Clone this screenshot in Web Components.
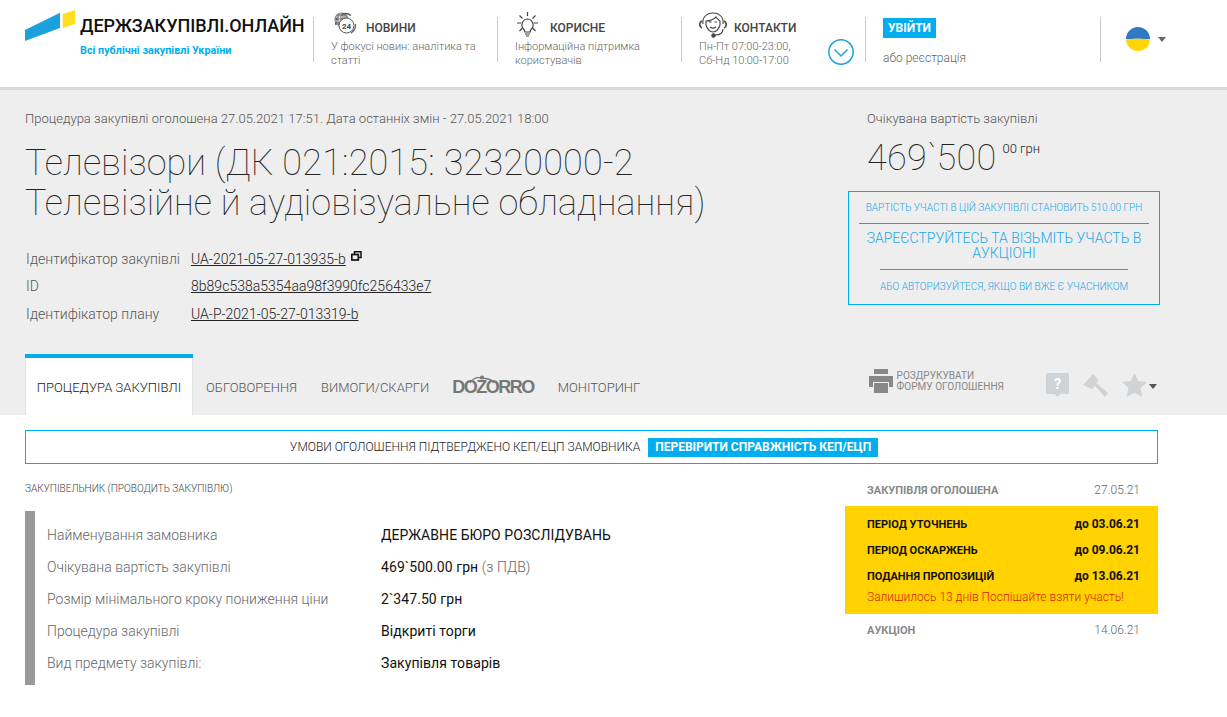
<!DOCTYPE html>
<html lang="uk"><head><meta charset="utf-8"><title>Держзакупівлі</title>
<style>
html,body{margin:0;padding:0;background:#fff;font-family:Roboto,"Liberation Sans",sans-serif;overflow:hidden}
body{width:1227px;height:717px}
</style></head><body>
<site-header></site-header>
<tender-hero></tender-hero>
<tender-tabs></tender-tabs>
<tender-body></tender-body>
<script>
function def(name,html){customElements.define(name,class extends HTMLElement{constructor(){super();this.attachShadow({mode:'open'}).innerHTML=html}})}
def('nav-col',`<style>
:host{display:block;width:184px;height:45px;box-sizing:border-box;border-left:1px solid #c9c9c9;padding-left:17px;position:relative}
.t{display:flex;align-items:center;height:24px;margin-top:-1px;gap:9px;font-size:12px;font-weight:500;color:#444}
::slotted(svg){flex:none}
.d{font-size:11px;line-height:14px;font-weight:300;color:#666;width:155px}
</style><div class="t"><slot name="icon"></slot><slot name="title"></slot></div><div class="d"><slot></slot></div>`);
def('site-header',`<style>
:host{display:flex;height:87px;box-sizing:border-box;padding:17px 0 0 25px;background:#fff;position:relative}
.logo{width:288px;flex:none;position:relative;height:45px}
.logo svg{position:absolute;left:0;top:-7px}
.name{position:absolute;left:55px;top:-2px;font-size:18px;line-height:22px;font-weight:500;color:#111;white-space:nowrap;letter-spacing:-.05px}
.sub{position:absolute;left:55px;top:27px;font-size:10.8px;line-height:14px;font-weight:700;color:#00aeef;white-space:nowrap}
.chev{position:absolute;left:827px;top:39px}
.login{width:235px;height:45px;box-sizing:border-box;border-left:1px solid #c9c9c9;padding-left:17px;flex:none}
.btn{display:inline-block;background:#00aeef;color:#fff;font-size:12px;line-height:20px;font-weight:700;padding:0 5px;height:20px}
.reg{font-size:12px;font-weight:300;color:#666;margin-top:12px;line-height:16px}
.lang{border-left:1px solid #c9c9c9;height:45px;flex:none;width:80px;position:relative}
.lang svg{position:absolute}
</style>
<div class="logo">
<svg width="52" height="32" viewBox="0 0 52 32"><polygon points="0,20 35,2.7 35,18 0,31" fill="#1ba1dc"/><polygon points="37.7,4 50,0 50,14 37.7,18" fill="#ffdd1f"/></svg>
<div class="name">ДЕРЖЗАКУПІВЛІ.ОНЛАЙН</div><div class="sub">Всі публічні закупівлі України</div></div>
<nav-col><svg slot="icon" style="margin:0 0 8px 2px" width="24" height="24" viewBox="0 0 24 24" fill="none" stroke="#555"><path d="M3 13A9.5 9.5 0 0 1 18 3.5" stroke-width="1.5"/><circle cx="8.5" cy="7.5" r="7" fill="#666" stroke="none" opacity=".8"/><path d="M3 5h10M2 9h8M8 1c-2 3-2 7 0 12" stroke="#eee" stroke-width=".8"/><circle cx="13.5" cy="13.5" r="7.5" fill="#fff" stroke="#555" stroke-width="1"/><text x="13.5" y="16.5" font-size="8" font-weight="700" text-anchor="middle" fill="#444" stroke="none" font-family="Roboto">24</text><path d="M22.5 12a9.5 9.5 0 0 1-4.5 9" stroke-width="1.1"/></svg><span slot="title">НОВИНИ</span>У фокусі новин: аналітика та статті</nav-col>
<nav-col><svg slot="icon" style="margin:0 1px 8px 0" width="25" height="25" viewBox="0 0 25 25" fill="none" stroke="#444" stroke-width="1.2"><path d="M12.5 7a6 6 0 0 0-3.5 10.5c.6.6.8 1.2.8 2.5h5.4c0-1.3.2-1.9.8-2.5A6 6 0 0 0 12.5 7z"/><path d="M10 22h5M11 24h3M12.5 0v4M2 11H6.5M18.5 11H23M4.5 3.5l3 3M20.5 3.5l-3 3M4.5 19l3-3M20.5 19l-3-3"/></svg><span slot="title">КОРИСНЕ</span>Інформаційна підтримка користувачів</nav-col>
<nav-col><svg slot="icon" style="margin:0 -2px 6px 0" width="28" height="26" viewBox="0 0 28 26" fill="none" stroke="#444" stroke-width="1.1"><path d="M4 12C3 6 7 1 14 1s11 5 10 11"/><path d="M7 9c4 0 7-1 10-4 1 2 3 3 4 4v4c-1 4-4 7-7 7s-6-3-7-7z"/><path d="M3 9c-3 1-3 6 0 7M25 9c3 1 3 6 0 7" stroke-width="1.6"/><path d="M10 10h2.5M15.5 10h2.5M11 15c2 1.5 4 1.5 6 0"/><path d="M24 17c0 4-3 6-8 6"/><circle cx="14.5" cy="23.5" r="1.7" fill="#444"/></svg><span slot="title">КОНТАКТИ</span>Пн-Пт 07:00-23:00,<br>Сб-Нд 10:00-17:00</nav-col>
<div class="login"><span class="btn">УВІЙТИ</span><div class="reg">або реєстрація</div></div>
<div class="lang"><svg style="left:25px;top:10px" width="24" height="24" viewBox="0 0 24 24"><path d="M0 12a12 12 0 0 1 24 0z" fill="#3079c5"/><path d="M0 12a12 12 0 0 0 24 0z" fill="#ffd503"/><path d="M.2 13.5a12 2.5 0 0 1 23.6 0 12 12 0 0 0 .2-1.5H0z" fill="#ffe35a"/></svg><svg style="left:57px;top:20px" width="8" height="5" viewBox="0 0 8 5"><path d="M0 0h8L4 5z" fill="#666"/></svg></div>
<svg class="chev" width="28" height="28" viewBox="0 0 28 28" fill="none" stroke="#1ba1dc" stroke-width="1.5"><circle cx="14" cy="13" r="12.2"/><path d="M7.5 10.5l6.5 6.5 6.5-6.5"/></svg>`);
def('id-row',`<style>:host{display:flex;height:27.5px;align-items:center;font-size:14px;font-weight:300;color:#555}
.l{width:166px;flex:none;box-sizing:border-box;padding-left:1px;letter-spacing:.03px}.v{color:#222;text-decoration:underline;font-weight:300;display:flex;letter-spacing:.02px}
</style><div class="l"><slot name="label"></slot></div><div class="v"><slot></slot></div>`);
def('tender-hero',`<style>
:host{display:flex;height:267px;box-sizing:border-box;background:#eee;border-top:3px solid #d8d8d8;padding:0 67px 0 25px}
.left{width:823px;flex:none}
.meta{font-size:13px;font-weight:300;color:#555;line-height:16px;margin-top:21px;letter-spacing:.024px}
h1{margin:16px 0 0;font-size:36px;line-height:40px;font-weight:100;color:#222;width:760px;letter-spacing:.08px}
h1 span{letter-spacing:.2px}
.ids{margin-top:22px}
.copy{margin:0 0 0 5px}
.right{width:312px;flex:none}
.cap{font-size:13px;font-weight:300;color:#555;line-height:16px;margin:21px 0 0 19px}
.price{font-size:36px;font-weight:100;color:#222;margin:9px 0 0 19px;line-height:44px;white-space:nowrap;letter-spacing:.25px}
.price sup{font-size:13px;font-weight:300;vertical-align:baseline;position:relative;top:-17px;margin-left:6px;letter-spacing:0}
.box{margin-top:3px;height:114px;box-sizing:border-box;border:1px solid #00aeef;color:#1ba8ea;text-align:center;padding-top:7px}
.a{font-size:10px;font-weight:300;line-height:18px;white-space:nowrap;height:24px;border-bottom:1px solid #00aeef;margin:0 10px}
.b{font-size:14px;font-weight:300;line-height:14.5px;padding:7px 0 9px;margin:0 10px}
.c{font-size:10px;font-weight:300;line-height:18px;border-top:1px solid #00aeef;margin:0 31px;padding-top:8px;white-space:nowrap}
</style>
<div class="left"><div class="meta">Процедура закупівлі оголошена 27.05.2021 17:51. Дата останніх змін - 27.05.2021 18:00</div>
<h1>Телевізори (ДК <span>021:2015: 32320000-2</span> Телевізійне й аудіовізуальне обладнання)</h1>
<div class="ids">
<id-row><span slot="label">Ідентифікатор закупівлі</span>UA-2021-05-27-013935-b<svg class="copy" width="11" height="11" viewBox="0 0 11 11" fill="none" stroke="#111" stroke-width="1.5"><path d="M3.5 3V.8H10V6.5H8"/><rect x=".8" y="3.5" width="6.5" height="5.5" stroke-width="1.7"/></svg></id-row>
<id-row><span slot="label">ID</span>8b89c538a5354aa98f3990fc256433e7</id-row>
<id-row><span slot="label">Ідентифікатор плану</span>UA-P-2021-05-27-013319-b</id-row>
</div></div>
<div class="right"><div class="cap">Очікувана вартість закупівлі</div>
<div class="price">469\`500<sup>00 грн</sup></div>
<div class="box"><div class="a">ВАРТІСТЬ УЧАСТІ В ЦІЙ ЗАКУПІВЛІ СТАНОВИТЬ 510.00 ГРН</div><div class="b">ЗАРЕЄСТРУЙТЕСЬ ТА ВІЗЬМІТЬ УЧАСТЬ В АУКЦІОНІ</div><div class="c">АБО АВТОРИЗУЙТЕСЯ, ЯКЩО ВИ ВЖЕ Є УЧАСНИКОМ</div></div></div>`);
def('tender-tabs',`<style>
:host{display:flex;height:61px;background:#eee;padding-left:25px;padding-right:70px;align-items:stretch;font-size:13px;font-weight:300;color:#555;position:relative}
.tab{display:flex;align-items:center;padding:5px 12px 0;white-space:nowrap}
.on{background:#fff;border-top:4px solid #00aeef;color:#222;width:168px;box-sizing:border-box;justify-content:center;padding:1px 0 0;box-shadow:inset 1px 0 #e4e4e4,inset -1px 0 #e4e4e4;margin-right:1px}
.doz{font:700 18px "Liberation Sans",sans-serif;letter-spacing:-1.5px;color:#777;padding:5px 0 0;margin:0 12px 0 11px;position:relative}
.doz svg{position:absolute;left:16px;top:21px}
.spacer{flex:1}
.print{display:flex;align-items:center;gap:4px;font-size:10.05px;font-weight:400;color:#888;line-height:11.5px;margin-right:42px;padding-bottom:7px}
.icons{display:flex;align-items:center;gap:14px}
.icons svg{display:block}
</style>
<div class="tab on">ПРОЦЕДУРА ЗАКУПІВЛІ</div><div class="tab">ОБГОВОРЕННЯ</div><div class="tab">ВИМОГИ/СКАРГИ</div><div class="tab doz">DOZORRO<svg width="28" height="9" viewBox="0 0 28 9" fill="none" stroke="#777" stroke-width="1.3"><path d="M2 8C5 3 10 2 14 3s9 0 12 5"/><circle cx="14" cy="2.5" r="2" fill="#777" stroke="none"/></svg></div><div class="tab">МОНІТОРИНГ</div>
<div class="spacer"></div>
<div class="print"><svg width="24" height="24" viewBox="0 0 24 24" fill="#888"><rect x="5" y="0" width="14" height="5"/><path d="M0 7h24v11h-4v-5H4v5H0z"/><rect x="5" y="14" width="14" height="10"/></svg><div>РОЗДРУКУВАТИ<br>ФОРМУ ОГОЛОШЕННЯ</div></div>
<div class="icons">
<svg width="23" height="24" viewBox="0 0 24 24" preserveAspectRatio="none"><path d="M2 0h20a2 2 0 0 1 2 2v17a2 2 0 0 1-2 2h-7l-3 3-3-3H2a2 2 0 0 1-2-2V2a2 2 0 0 1 2-2z" fill="#d0d3d6"/><text x="12" y="16" font-size="15" font-weight="700" fill="#fff" text-anchor="middle" font-family="Roboto">?</text></svg>
<svg width="25" height="24" viewBox="0 0 25 24" fill="#d0d3d6"><path d="M0 12 10 1l6 6-3 3 12 10-3 4-10-11-3 3z"/></svg>
<div style="display:flex;align-items:center;gap:2px"><svg width="25" height="24" viewBox="0 0 25 24" fill="#d0d3d6"><path d="M12.5 0l3.7 8 8.8 1-6.5 6 1.8 9-7.8-4.5L4.7 24l1.8-9L0 9l8.8-1z"/></svg><svg width="8" height="5" viewBox="0 0 8 5" style="margin-top:4px"><path d="M0 0h8L4 5z" fill="#555"/></svg></div>
</div>`);
def('info-row',`<style>:host{display:flex;height:32px;align-items:center;font-size:14px;color:#111;letter-spacing:.07px}
.l{width:334px;flex:none;font-weight:300;color:#666;letter-spacing:0}
</style><div class="l"><slot name="label"></slot></div><div><slot></slot></div>`);
def('stage-row',`<style>:host{display:flex;justify-content:space-between;align-items:center;font-size:11px;height:26px;font-weight:700;color:#111;white-space:nowrap}
.d{font-size:12px}
</style><span><slot></slot></span><span class="d"><slot name="date"></slot></span>`);
def('tender-body',`<style>
:host{display:block;padding:15px 0 0 25px;background:#fff;height:302px;box-sizing:border-box}
.kep{width:1133px;height:34px;box-sizing:border-box;border:1px solid #00aeef;padding-right:15px;display:flex;justify-content:center;align-items:center;gap:8px;font-size:12px;font-weight:300;color:#222}
.kep b{background:#00aeef;color:#fff;font-weight:700;padding:0 7px;line-height:19px;height:19px}
.cols{display:flex}
.main{width:820px;flex:none}
.lbl{font-size:10px;font-weight:300;color:#444;margin-top:19px;line-height:12px}
.card{margin-top:16px;height:174px;box-sizing:border-box;border-left:10px solid #999;padding:8px 0 0 12px}
.side{width:313px;flex:none;margin-top:10px}
.top{display:flex;justify-content:space-between;height:32px;align-items:center;padding:0 18px 0 22px;font-size:11px;font-weight:700;color:#888}
.top span:last-child{font-size:12px;font-weight:300;color:#666}
.y{background:#ffd200;height:108px;box-sizing:border-box;padding:5px 18px 0 22px}
.w{font-size:12px;font-weight:300;color:#d9211c;line-height:14px;margin-top:1px;white-space:nowrap}
</style>
<div class="kep"><span>УМОВИ ОГОЛОШЕННЯ ПІДТВЕРДЖЕНО КЕП/ЕЦП ЗАМОВНИКА</span><b>ПЕРЕВІРИТИ СПРАВЖНІСТЬ КЕП/ЕЦП</b></div>
<div class="cols"><div class="main"><div class="lbl">ЗАКУПІВЕЛЬНИК (ПРОВОДИТЬ ЗАКУПІВЛЮ)</div>
<div class="card">
<info-row><span slot="label">Найменування замовника</span>ДЕРЖАВНЕ БЮРО РОЗСЛІДУВАНЬ</info-row>
<info-row><span slot="label">Очікувана вартість закупівлі</span><span>469\`500.00 грн <span style="color:#666;font-weight:300">(з ПДВ)</span></span></info-row>
<info-row><span slot="label">Розмір мінімального кроку пониження ціни</span>2\`347.50 грн</info-row>
<info-row><span slot="label">Процедура закупівлі</span>Відкриті торги</info-row>
<info-row><span slot="label">Вид предмету закупівлі:</span>Закупівля товарів</info-row>
</div></div>
<div class="side"><div class="top"><span>ЗАКУПІВЛЯ ОГОЛОШЕНА</span><span>27.05.21</span></div>
<div class="y"><stage-row>ПЕРІОД УТОЧНЕНЬ<span slot="date">до 03.06.21</span></stage-row><stage-row>ПЕРІОД ОСКАРЖЕНЬ<span slot="date">до 09.06.21</span></stage-row><stage-row>ПОДАННЯ ПРОПОЗИЦІЙ<span slot="date">до 13.06.21</span></stage-row><div class="w">Залишилось 13 днів Поспішайте взяти участь!</div></div>
<div class="top"><span>АУКЦІОН</span><span>14.06.21</span></div></div></div>`);
</script>
</body></html>
